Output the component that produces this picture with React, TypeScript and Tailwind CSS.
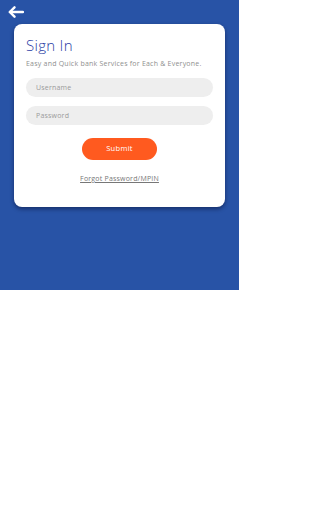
export default function App() {
    return (
        <div className="w-[239px] h-[512px] bg-white" style={{ fontFamily: "'Open Sans', sans-serif" }}>
            {/* Blue header area */}
            <div className="h-[290px] bg-[#2853a6] pt-[6px] px-[14px]">
                <button className="block ml-[-6px] text-white">
                    <svg width="16" height="12" viewBox="0 0 16 12" fill="none" stroke="currentColor" strokeWidth="2.4" strokeLinecap="round" strokeLinejoin="round">
                        <path d="M15 6H2" />
                        <path d="M6.5 1.3L1.8 6l4.7 4.7" />
                    </svg>
                </button>

                {/* Card */}
                <div className="mt-[6px] bg-white rounded-[8px] shadow-[0_2px_4px_rgba(0,0,30,0.45)] px-[12px] pt-[12px] pb-[23px]">
                    <h1 className="text-[15px] leading-[18px] text-[#2a3ca4] font-light tracking-[0.3px]">Sign In</h1>
                    <p className="mt-[5px] text-[7px] leading-[10px] text-[#8f8f8f] whitespace-nowrap tracking-[0.22px]">
                        Easy and Quick bank Services for Each &amp; Everyone.
                    </p>

                    <div className="mt-[9px] flex flex-col gap-[9px]">
                        <input
                            type="text"
                            placeholder="Username"
                            className="w-full h-[19px] rounded-full bg-[#eeeeee] px-[10px] text-[7px] tracking-[0.2px] text-[#333] placeholder:text-[#9a9a9a] outline-none"
                        />
                        <input
                            type="password"
                            placeholder="Password"
                            className="w-full h-[19px] rounded-full bg-[#eeeeee] px-[10px] text-[7px] tracking-[0.2px] text-[#333] placeholder:text-[#9a9a9a] outline-none"
                        />
                    </div>

                    <div className="mt-[13px] flex justify-center">
                        <button className="w-[75px] h-[22px] rounded-full bg-[#ff5a1f] text-white text-[7.5px] font-medium tracking-[0.3px]">
                            Submit
                        </button>
                    </div>

                    <div className="mt-[14px] text-center text-[7px] leading-[10px]">
                        <a className="text-[#777] underline tracking-[0.2px]">Forgot Password/MPIN</a>
                    </div>
                </div>
            </div>
        </div>
    );
}
